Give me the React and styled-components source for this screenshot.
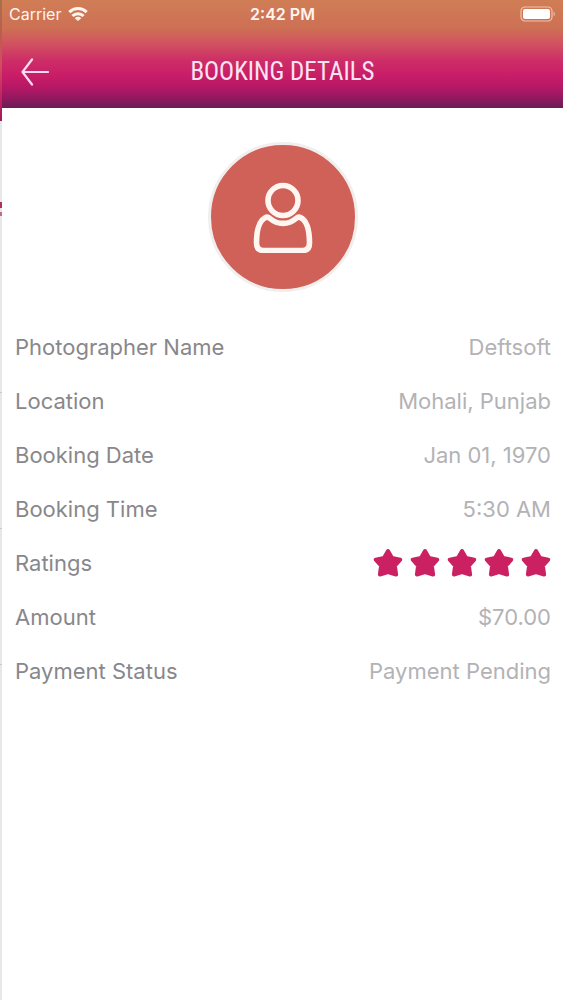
import React from 'react';
import styled, { createGlobalStyle } from 'styled-components';

const GlobalStyle = createGlobalStyle`
  * {
    box-sizing: border-box;
  }

  body {
    margin: 0;
    background: #ffffff;
    font-family: Inter, 'Open Sans', sans-serif;
  }
`;

const Layout = styled.div`
  display: flex;
  min-height: 100vh;
`;

// Sliver of the screen underneath, still visible while this one slides in
const PreviousScreen = styled.div`
  width: 2px;
  flex-shrink: 0;
  display: flex;
  flex-direction: column;
  background: #e6e7ea;
`;

const PreviousHeader = styled.div`
  height: 121px;
  background: linear-gradient(to bottom, #a87048 0, #b8604c 32px, #d0505c 64px, #c02060 100px, #a01c5c 121px);
`;

const PreviousMark = styled.div`
  height: ${props => props.size}px;
  margin-top: ${props => props.gap}px;
  background: ${props => props.color};
`;

const Screen = styled.div`
  flex: 1;
  min-width: 0;
  background: #ffffff;
`;

const TopArea = styled.div`
  background: linear-gradient(
    to bottom,
    #d07e56 0,
    #cd7054 28px,
    #d1525f 44px,
    #cd2e67 60px,
    #c91c68 76px,
    #b01765 90px,
    #861a5c 101px,
    #6a1c54 108px
  );
`;

const StatusBar = styled.div`
  display: grid;
  grid-template-columns: 1fr auto 1fr;
  align-items: center;
  height: 28px;
  padding: 0 7px;
  color: #fff4ee;
  font-size: 16px;
  line-height: 20px;
`;

const Carrier = styled.div`
  display: flex;
  align-items: center;
  gap: 7px;
`;

const Clock = styled.div`
  font-weight: 600;
`;

const Battery = styled.div`
  display: flex;
  justify-content: flex-end;
`;

const Header = styled.header`
  display: grid;
  grid-template-columns: 46px 1fr 46px;
  align-items: center;
  height: 80px;
  padding: 8px 10px 0;
`;

const BackButton = styled.button`
  display: flex;
  align-items: center;
  justify-content: center;
  height: 44px;
  padding: 0;
  border: 0;
  background: none;
  color: #fbdcf0;
  cursor: pointer;
`;

const Title = styled.h1`
  margin: 0;
  color: #fbe4f2;
  font-family: 'Roboto Condensed', 'Liberation Sans Narrow', Roboto, sans-serif;
  font-size: 25px;
  font-weight: 400;
  line-height: 32px;
  text-align: center;
  white-space: nowrap;
`;

const Avatar = styled.div`
  display: flex;
  align-items: center;
  justify-content: center;
  width: 150px;
  height: 150px;
  margin: 34px auto 28px;
  border: 3px solid #f1eeee;
  border-radius: 50%;
  background: #cf6158;
`;

const Details = styled.dl`
  margin: 0;
  padding: 0 12px 0 13px;
`;

const Row = styled.div`
  display: flex;
  align-items: center;
  justify-content: space-between;
  height: 54px;
  font-size: 22px;
  font-weight: 400;
  line-height: 28px;
`;

const Label = styled.dt`
  color: #88878b;
`;

const Value = styled.dd`
  margin: 0;
  color: #b3b2b5;
`;

const Stars = styled.div`
  display: flex;
  gap: 7px;
  color: #cb2163;
`;

const WifiIcon = () => (
  <svg width="20" height="14" viewBox="0 0 20 14" fill="none" stroke="currentColor" strokeWidth="3">
    <path d="M1.3 5.1a12.6 12.6 0 0 1 17.4 0" />
    <path d="M4.4 9a7.9 7.9 0 0 1 11.2 0" />
    <path d="M10 14L6.7 11.2a4.6 4.6 0 0 1 6.6 0z" fill="currentColor" stroke="none" />
  </svg>
);

const BatteryIcon = () => (
  <svg width="36" height="16" viewBox="0 0 36 16" fill="none">
    <rect x="1" y="1" width="31" height="14" rx="4" stroke="#f0c4ac" strokeWidth="1.2" />
    <rect x="3" y="3" width="27" height="10" rx="2" fill="#ffffff" />
    <path d="M33.6 5.8c1.6.6 1.6 3.8 0 4.4z" fill="#f0c4ac" />
  </svg>
);

const BackIcon = () => (
  <svg width="28" height="28" viewBox="0 0 28 28" fill="none" stroke="currentColor" strokeWidth="2.2" strokeLinecap="round" strokeLinejoin="round">
    <path d="M27 14H1.5M11 1.5L1.5 14L11 26.5" />
  </svg>
);

const PersonIcon = () => (
  <svg width="60" height="72" viewBox="0 0 60 72" fill="none" stroke="#fff6f1" strokeWidth="5.6" strokeLinejoin="round">
    <circle cx="30" cy="19.5" r="15" />
    <path d="M12.5 36.5C5.5 40 3.5 52 3.5 62C3.5 67 6 69.5 10.5 69.5H49.5C54 69.5 56.5 67 56.5 62C56.5 52 54.5 40 47.5 36.5C46 35.7 44.5 36.2 43 37.5C35.5 44 24.5 44 17 37.5C15.5 36.2 14 35.7 12.5 36.5Z" />
  </svg>
);

const StarIcon = () => (
  <svg width="30" height="30" viewBox="0 0 30 30" fill="currentColor" stroke="currentColor" strokeWidth="4" strokeLinejoin="round">
    <path d="M15 3L19 10L27.2 11.6L21.9 17.8L23.1 26.5L15 24L6.9 26.5L8.1 17.8L2.8 11.6L11 10Z" />
  </svg>
);

const Rating = ({ count }) => (
  <Stars role="img" aria-label={`${count} out of 5`}>
    {Array.from({ length: count }, (_, i) => (
      <StarIcon key={i} />
    ))}
  </Stars>
);

const booking = [
  { label: 'Photographer Name', value: 'Deftsoft' },
  { label: 'Location', value: 'Mohali, Punjab' },
  { label: 'Booking Date', value: 'Jan 01, 1970' },
  { label: 'Booking Time', value: '5:30 AM' },
  { label: 'Ratings', value: <Rating count={5} /> },
  { label: 'Amount', value: '$70.00' },
  { label: 'Payment Status', value: 'Payment Pending' },
];

const App = () => {
  return (
    <>
      <GlobalStyle />
      <Layout>
        <PreviousScreen aria-hidden="true">
          <PreviousHeader />
          <PreviousMark size={6} gap={81} color="#b03060" />
          <PreviousMark size={4} gap={4} color="#c46a8a" />
          <PreviousMark size={1} gap={176} color="#c8c8cc" />
          <PreviousMark size={1} gap={135} color="#c8c8cc" />
          <PreviousMark size={1} gap={135} color="#c8c8cc" />
        </PreviousScreen>
        <Screen>
          <TopArea>
            <StatusBar>
              <Carrier>
                Carrier
                <WifiIcon />
              </Carrier>
              <Clock>2:42 PM</Clock>
              <Battery>
                <BatteryIcon />
              </Battery>
            </StatusBar>
            <Header>
              <BackButton type="button" aria-label="Back">
                <BackIcon />
              </BackButton>
              <Title>BOOKING DETAILS</Title>
            </Header>
          </TopArea>
          <main>
            <Avatar>
              <PersonIcon />
            </Avatar>
            <Details>
              {booking.map(item => (
                <Row key={item.label}>
                  <Label>{item.label}</Label>
                  <Value>{item.value}</Value>
                </Row>
              ))}
            </Details>
          </main>
        </Screen>
      </Layout>
    </>
  );
};

export default App;
